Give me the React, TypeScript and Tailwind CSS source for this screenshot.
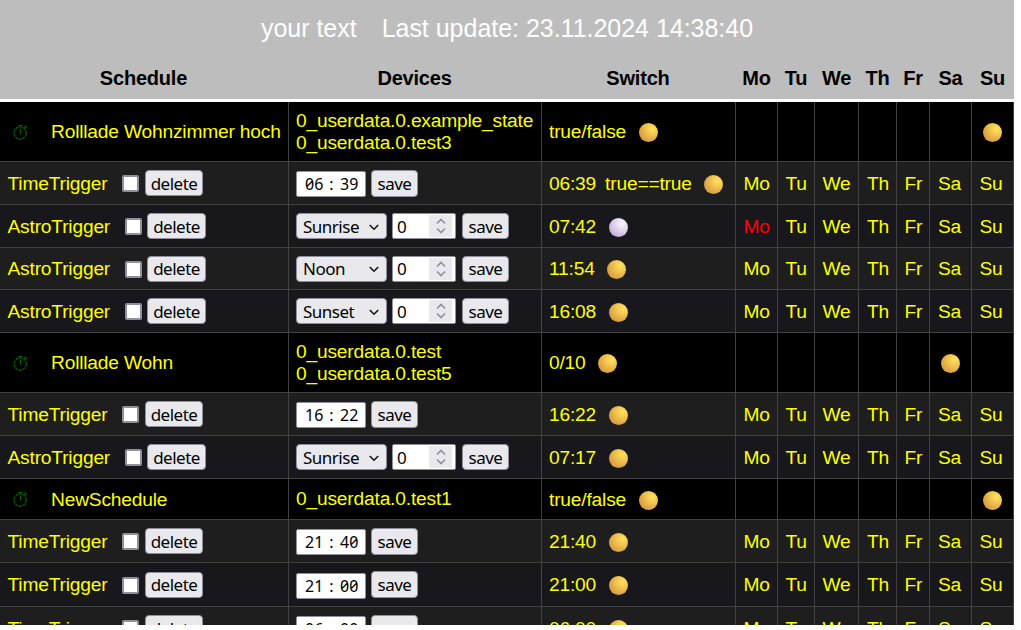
import React from "react";

const days = ["Mo", "Tu", "We", "Th", "Fr", "Sa", "Su"];

type Row = {
  kind: "schedule" | "time" | "astro";
  height: string;
  bg: string;
  name?: string;
  devices?: string[];
  event?: string;
  time?: string;
  sw: string;
  extra?: string;
  next?: string;
  off?: boolean;
  redDay?: string;
};

const DARK = "bg-[#1e1e1e]";
const BLUE = "bg-[#18171c]";

const rows: Row[] = [
  { kind: "schedule", height: "h-[60px]", bg: "bg-black", name: "Rolllade Wohnzimmer hoch", devices: ["0_userdata.0.example_state", "0_userdata.0.test3"], sw: "true/false", next: "Su" },
  { kind: "time", height: "h-[43px]", bg: DARK, time: "06:39", sw: "06:39", extra: "true==true" },
  { kind: "astro", height: "h-[43px]", bg: BLUE, event: "Sunrise", sw: "07:42", off: true, redDay: "Mo" },
  { kind: "astro", height: "h-[42px]", bg: DARK, event: "Noon", sw: "11:54" },
  { kind: "astro", height: "h-[43px]", bg: BLUE, event: "Sunset", sw: "16:08" },
  { kind: "schedule", height: "h-[60px]", bg: "bg-black", name: "Rolllade Wohn", devices: ["0_userdata.0.test", "0_userdata.0.test5"], sw: "0/10", next: "Sa" },
  { kind: "time", height: "h-[43px]", bg: DARK, time: "16:22", sw: "16:22" },
  { kind: "astro", height: "h-[43px]", bg: BLUE, event: "Sunrise", sw: "07:17" },
  { kind: "schedule", height: "h-[41px]", bg: "bg-black", name: "NewSchedule", devices: ["0_userdata.0.test1"], sw: "true/false", next: "Su" },
  { kind: "time", height: "h-[43px]", bg: DARK, time: "21:40", sw: "21:40" },
  { kind: "time", height: "h-[44px]", bg: BLUE, time: "21:00", sw: "21:00" },
  { kind: "time", height: "h-[43px]", bg: DARK, time: "06:00", sw: "06:00" },
];

const cols = "grid shrink-0 grid-cols-[289px_253px_194px_42px_37px_44px_38px_33px_42px_42px]";
const cell = "flex items-center border-r border-b border-[#424242] whitespace-nowrap";
const control = "border border-[#8f8f9d] text-black font-['Noto_Sans',sans-serif] flex items-center shrink-0";

function Ball({ off = false }: { off?: boolean }) {
  return (
    <span
      className={
        "block size-[19px] shrink-0 rounded-full " +
        (off
          ? "bg-[radial-gradient(circle_at_68%_28%,#f8f4fa_0%,#e3d9ee_35%,#c9b6e0_70%,#b79fd0_100%)]"
          : "bg-[radial-gradient(circle_at_72%_30%,#ffe260_0%,#f3c850_30%,#dca344_68%,#c98c55_100%)]")
      }
    />
  );
}

function Stopwatch() {
  return (
    <svg className="block size-[16px] shrink-0" viewBox="0 0 16 16" fill="none" stroke="#006400" strokeWidth="1.2">
      <circle cx="7.2" cy="9" r="6.1" strokeDasharray="3.2 .63" />
      <path d="M7.5 4.5v5" />
      <path d="M5.2 1.5h4.4M7.5 1.5V3M11.2 4.4l1.8-1.8M11.6 1.5l2.1 2.1" />
    </svg>
  );
}

function Button({ label, width, height = "h-[26px]" }: { label: string; width: string; height?: string }) {
  return (
    <button className={`${control} ${width} ${height} justify-center rounded-[4px] bg-[#e9e9ed] pt-px text-[17px] leading-[24px] tracking-[-0.5px]`}>
      {label}
    </button>
  );
}

function TimeField({ value }: { value: string }) {
  const [h, m] = value.split(":");
  return (
    <div className="mt-[2px] mr-[5px] flex h-[26px] w-[70px] items-center rounded-[2px] border border-[#8f8f9d] bg-white pl-[8px] font-['Noto_Sans',sans-serif] text-[16px] slashed-zero tracking-normal text-black">
      <span className="w-[18px]">{h}</span>
      <span className="w-[17px] text-center">:</span>
      <span>{m}</span>
    </div>
  );
}

function AstroFields({ event }: { event: string }) {
  return (
    <>
      <div className={`${control} mr-[5px] h-[26px] w-[91px] justify-between rounded-[4px] bg-[#e9e9ed] pr-[7px] pl-[6px] text-[17px] leading-[24px] tracking-[-0.5px]`}>
        <span className="pt-px">{event}</span>
        <svg className="mt-px size-[10px] shrink-0" viewBox="0 0 10 10" fill="none" stroke="#15141a" strokeWidth="1.6">
          <path d="M.8 3 5 7.2 9.2 3" />
        </svg>
      </div>
      <div className={`${control} mr-[6px] h-[26px] w-[64px] justify-between rounded-[2px] bg-white pr-[3px] pl-[4px] text-[17px] leading-[24px]`}>
        <span className="pt-px">0</span>
        <span className="flex h-[22px] w-[23px] items-center justify-center bg-[#e9e9ed]">
          <svg className="h-[16px] w-[10px]" viewBox="0 0 10 16" fill="none" stroke="#8f8f9d" strokeWidth="1.6">
            <path d="M1 5.5 5 1.5l4 4M1 10.5l4 4 4-4" />
          </svg>
        </span>
      </div>
    </>
  );
}

function ScheduleRow({ row }: { row: Row }) {
  const schedule = row.kind === "schedule";
  return (
    <div className={`${cols} ${row.height} ${row.bg}`}>
      <div className={cell}>
        {schedule ? (
          <>
            <span className="ml-[13px] w-[38px]"><Stopwatch /></span>
            <span className="pt-[2px]">{row.name}</span>
          </>
        ) : (
          <>
            <span className={row.kind === "time" ? "w-[122px] pt-[2px] pl-[7.5px]" : "w-[125px] pt-[2px] pl-[7.5px]"}>
              {row.kind === "time" ? "TimeTrigger" : "AstroTrigger"}
            </span>
            <span className={`mt-px size-[17px] shrink-0 rounded-[2px] border-2 border-[#8f8f9d] bg-white ${row.kind === "time" ? "mr-[6px]" : "mr-[5px]"}`} />
            <Button label="delete" width={row.kind === "time" ? "w-[58px]" : "w-[59px]"} />
          </>
        )}
      </div>
      <div className={`${cell} pl-[7px]`}>
        {row.devices && (
          <div className="leading-[22px]">
            {row.devices.map((d) => <div key={d}>{d}</div>)}
          </div>
        )}
        {row.time && <><TimeField value={row.time} /><Button label="save" width="w-[47px]" height="h-[27px]" /></>}
        {row.event && <><AstroFields event={row.event} /><Button label="save" width="w-[47px]" /></>}
      </div>
      <div className={`${cell} pt-[2px] pl-[7px]`}>
        <span className={row.extra ? "mr-[9px]" : "mr-[12.5px]"}>{row.sw}</span>
        {row.extra && <span className="mr-[12.5px]">{row.extra}</span>}
        <Ball off={row.off} />
      </div>
      {days.map((d) => (
        <div key={d} className={`${cell} pt-[2px] ${schedule ? "justify-center" : d === "Sa" || d === "Th" ? "pl-[8px]" : "pl-[7.5px]"} ${row.redDay === d ? "text-[#ff0000]" : ""}`}>
          {schedule ? (row.next === d ? <Ball /> : null) : d}
        </div>
      ))}
    </div>
  );
}

export default function App() {
  return (
    <div className="h-[630px] w-[1021px] overflow-hidden bg-white font-['Liberation_Sans',Arial,sans-serif]">
      <div className="flex h-[625px] w-[1014px] flex-col overflow-hidden text-[19.2px] tracking-[-0.19px] text-[#ffff00]">
        <div className="flex h-[57px] shrink-0 justify-center gap-[25px] bg-[#bdbdbd] pt-[14px] text-[25px] leading-[29px] tracking-[-0.02px] whitespace-pre text-white">
          <span>your text</span>
          <span>Last update: 23.11.2024 14:38:40</span>
        </div>
        <div className={`${cols} h-[45px] items-center border-b-3 border-white bg-[#bdbdbd] text-center text-[20px] font-bold tracking-[-0.2px] text-black`}>
          <span className="pr-[2px]">Schedule</span>
          <span className="pr-[2px]">Devices</span>
          <span className="pr-[2px]">Switch</span>
          {days.map((d) => <span key={d} className="pr-px">{d}</span>)}
        </div>
        {rows.map((row, i) => <ScheduleRow key={i} row={row} />)}
      </div>
    </div>
  );
}
